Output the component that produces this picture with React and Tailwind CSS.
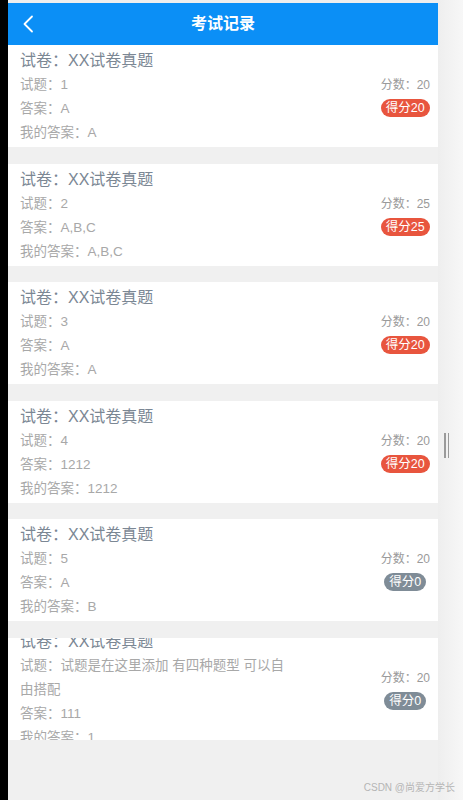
import React from 'react';

const records = [
  { q: '1', answer: 'A', mine: 'A', score: 20, got: 20 },
  { q: '2', answer: 'A,B,C', mine: 'A,B,C', score: 25, got: 25 },
  { q: '3', answer: 'A', mine: 'A', score: 20, got: 20 },
  { q: '4', answer: '1212', mine: '1212', score: 20, got: 20 },
  { q: '5', answer: 'A', mine: 'B', score: 20, got: 0 },
  { q: '试题是在这里添加 有四种题型 可以自由搭配', answer: '111', mine: '1', score: 20, got: 0 },
];

const font = { fontFamily: '"Liberation Sans", "Noto Sans CJK SC", sans-serif' };

function RecordCard({ item }) {
  return (
    <div className="h-[102px] shrink-0 bg-white flex items-center overflow-hidden pl-[12px] pr-[8px] pt-[2px]">
      <div className="w-[268px] flex flex-col">
        <div className="text-[16px] leading-[24px] text-[#7b8794]">试卷：XX试卷真题</div>
        <div className="text-[13.5px] leading-[24px] text-[#a8a8a8]">试题：{item.q}</div>
        <div className="text-[13.5px] leading-[24px] text-[#a8a8a8]">答案：{item.answer}</div>
        <div className="text-[13.5px] leading-[24px] text-[#a8a8a8]">我的答案：{item.mine}</div>
      </div>
      <div className="flex-1" />
      <div className="flex flex-col items-center gap-[6px]">
        <div className="text-[12px] leading-[16px] text-[#9a9a9a]">分数：{item.score}</div>
        <div
          className={
            item.got > 0
              ? 'h-[18px] leading-[18px] px-[5px] rounded-full text-[12.5px] text-white bg-[#e8553e]'
              : 'h-[18px] leading-[18px] px-[5px] rounded-full text-[12.5px] text-white bg-[#7f8c97]'
          }
        >
          得分{item.got}
        </div>
      </div>
    </div>
  );
}

export default function App() {
  return (
    <div className="relative w-[463px] h-[800px] flex overflow-hidden" style={font}>
      <div className="w-[8px] bg-black" />
      <div className="w-[430px] flex flex-col bg-[#f0f0f0]">
        <div className="h-[3px] bg-[#eeeeee]" />
        <div className="h-[42px] shrink-0 bg-[#0b8ff6] flex items-center relative">
          <svg className="absolute left-[14px] top-[12px]" width="12" height="18" viewBox="0 0 12 18" fill="none">
            <path d="M10 1.5 L2.5 9 L10 16.5" stroke="white" strokeWidth="1.8" strokeLinecap="round" strokeLinejoin="round" />
          </svg>
          <div className="flex-1 text-center text-white font-bold text-[16px]">考试记录</div>
        </div>
        <div className="flex flex-col gap-[16.6px]">
          {records.map((item, i) => (
            <RecordCard key={i} item={item} />
          ))}
        </div>
      </div>
      <div className="flex-1 bg-gradient-to-r from-[#eeeeee] to-[#f7f7f7]" />
      {/* scrollbar grip */}
      <div className="absolute left-[444px] top-[433px] h-[25px] w-[5px] flex justify-between">
        <div className="w-[1.5px] bg-[#9a9a9a]" />
        <div className="w-[1.5px] bg-[#9a9a9a]" />
      </div>
      <div className="absolute right-[8px] bottom-[5px] text-[10px] text-[#b5b5b5]">CSDN @尚爱方学长</div>
    </div>
  );
}
